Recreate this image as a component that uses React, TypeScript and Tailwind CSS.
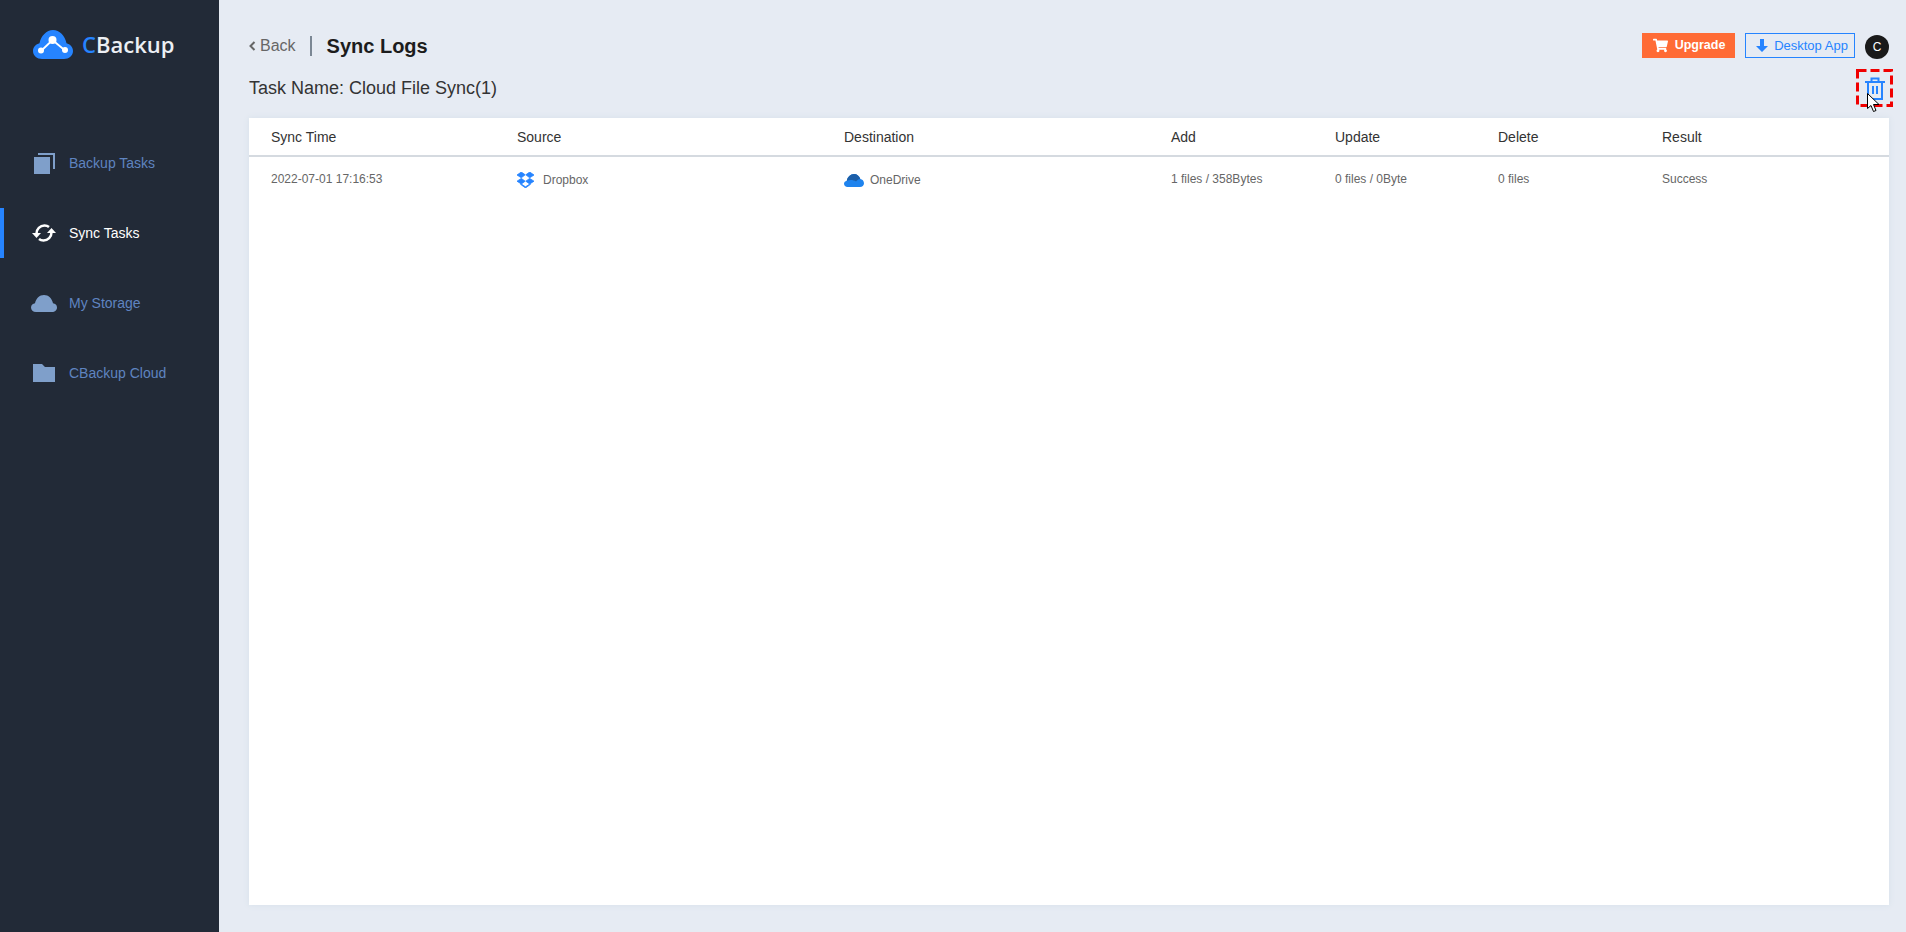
import { FaShoppingCart } from "react-icons/fa";

function Logo() {
  return (
    <svg width="40" height="29" viewBox="0 0 40 29" className="shrink-0">
      <path
        d="M9 29C4 29 0 25.500 0 21c0-4 3-7 6.500-7.800C8 6 13.500 0 20 0c6.500 0 12 5.500 13.500 13.200C37 14 40 17 40 21c0 4.500-4 8-9 8H9z"
        fill="#2684ff"
      />
      <path d="M8 21 19.500 10 32 20.500" stroke="#fff" strokeWidth="1.800" fill="none" />
      <circle cx="19.500" cy="10" r="4" fill="#fff" />
      <circle cx="8" cy="20.500" r="3" fill="#fff" />
      <circle cx="32" cy="20" r="3" fill="#fff" />
    </svg>
  );
}

function BackupIcon() {
  return (
    <svg width="21" height="21" viewBox="0 0 21 21">
      <rect x="0" y="4" width="16" height="17" fill="#7f9fca" />
      <path d="M4 1h16v15" stroke="#7f9fca" strokeWidth="2" fill="none" />
    </svg>
  );
}

function SyncIcon() {
  return (
    <svg width="24" height="18" viewBox="0 0 24 18">
      <path d="M4.500 9.500C4.500 5 8 1.500 12.500 1.500c1.800 0 3.300.5 4.500 1.500" stroke="#fff" strokeWidth="2.500" fill="none" />
      <path d="M0 9h9l-4.500 5z" fill="#fff" />
      <path d="M19.500 8.500c0 4.500-3.500 8-8 8-1.800 0-3.300-.5-4.500-1.500" stroke="#fff" strokeWidth="2.500" fill="none" />
      <path d="M15 9h9l-4.500-5z" fill="#fff" />
    </svg>
  );
}

function CloudIcon() {
  return (
    <svg width="26" height="17" viewBox="0 0 26 17">
      <path
        d="M5 17C2 17 0 15 0 12.500 0 10 2 8.500 4 8.200 5 3.500 8.500 0 13 0s8 3.500 9 8.200c2.200.3 4 1.800 4 4.300S24 17 21 17H5z"
        fill="#7f9fca"
      />
    </svg>
  );
}

function FolderIcon() {
  return (
    <svg width="22" height="18" viewBox="0 0 22 18">
      <path d="M0 0h9l3 3h10v15H0z" fill="#7f9fca" />
    </svg>
  );
}

function DropboxIcon() {
  return (
    <svg width="17" height="16" viewBox="0 0 17 16">
      <path
        d="M4.300 0 8.200 2.800 4.300 5.800 0 3zM12.700 0 8.800 2.800l3.900 3L17 3zM4.300 6.400 8.200 9.200 4.300 12 0 9.200zM12.700 6.400 8.800 9.200l3.900 2.800L17 9.200zM3.500 12.300l5 3.700 5-3.700-1-.1-4 2.600-3.900-2.600z"
        fill="#2684ff"
        stroke="#2684ff"
        strokeWidth="0.800"
      />
    </svg>
  );
}

function OneDriveIcon() {
  return (
    <svg width="20" height="13" viewBox="0 0 20 13">
      <path
        d="M3.500 13C1.500 13 0 11.500 0 9.800 0 8.200 1.200 7 2.800 6.700 3.500 3 6.500 0 10 0c3 0 5.500 2 6.300 5 2 .2 3.700 2 3.700 4.200C20 11.300 18.300 13 16 13H3.500z"
        fill="#1e83ee"
      />
      <path
        d="M2.800 6.700C3.500 3 6.500 0 10 0c3 0 5.500 2 6.300 5-2.300.2-3.500 1.500-4.300 2.500C10 6 6 5.500 2.800 6.700z"
        fill="#1c5fa8"
      />
    </svg>
  );
}

function TrashIcon() {
  return (
    <svg width="20" height="23" viewBox="0 0 20 23">
      <path d="M0 5h20M6.500 5V1.500h7V5" stroke="#2684ff" strokeWidth="2" fill="none" />
      <path d="M3 5v17h14V5" stroke="#2684ff" strokeWidth="2" fill="none" />
      <path d="M8 9v8M12 9v8" stroke="#2684ff" strokeWidth="2" fill="none" />
    </svg>
  );
}

function CursorIcon() {
  return (
    <svg width="13" height="20" viewBox="0 0 13 20">
      <path d="M.5.500v15l3.500-3 2.500 6 2.500-1-2.500-6H12z" fill="#fff" stroke="#000" strokeWidth="1" />
    </svg>
  );
}

function DownloadIcon() {
  return (
    <svg width="12" height="13" viewBox="0 0 12 13">
      <path d="M4 0h4v7h4l-6 6-6-6h4z" fill="#2684ff" />
    </svg>
  );
}

const nav = [
  { label: "Backup Tasks", icon: <BackupIcon />, active: false },
  { label: "Sync Tasks", icon: <SyncIcon />, active: true },
  { label: "My Storage", icon: <CloudIcon />, active: false },
  { label: "CBackup Cloud", icon: <FolderIcon />, active: false },
];

const head = [
  { label: "Sync Time", w: "w-[246px]" },
  { label: "Source", w: "w-[327px]" },
  { label: "Destination", w: "w-[327px]" },
  { label: "Add", w: "w-[164px]" },
  { label: "Update", w: "w-[163px]" },
  { label: "Delete", w: "w-[164px]" },
  { label: "Result", w: "flex-1" },
];

export default function App() {
  return (
    <div className="flex h-screen w-full overflow-hidden bg-[#e6ebf3] font-['Liberation_Sans',Arial,sans-serif]">
      <aside className="flex w-[219px] shrink-0 flex-col bg-[#222a37]">
        <div className="flex h-[138px] items-start gap-[9px] pl-[33px] pt-[30px]">
          <Logo />
          <span className="font-['Open_Sans',sans-serif] text-[22px] font-semibold leading-[29px] text-[#eceff4]">
            <span className="text-[#2684ff]">C</span>Backup
          </span>
        </div>
        <nav className="flex flex-col gap-5">
          {nav.map((n) => (
            <div key={n.label} className="relative flex h-[50px] items-center">
              {n.active && <div className="absolute inset-y-0 left-0 w-1 bg-[#2684ff]" />}
              <div className="flex w-[69px] justify-center pl-[19px]">{n.icon}</div>
              <span className={`text-sm ${n.active ? "text-white" : "text-[#5f84c0]"}`}>{n.label}</span>
            </div>
          ))}
        </nav>
      </aside>

      <main className="flex min-w-0 flex-1 flex-col pb-[27px] pl-[30px] pr-[17px]">
        <div className="flex h-[70px] shrink-0 items-start justify-between pt-[32px]">
          <div className="mt-[1px] flex h-[25px] items-center">
            <svg width="7" height="10" viewBox="0 0 7 10" className="mr-[4px]">
              <path d="M5.500 1 1.500 5l4 4" stroke="#666" strokeWidth="2" fill="none" />
            </svg>
            <span className="text-base text-[#666]">Back</span>
            <span className="ml-[14px] mr-[15px] h-[20px] w-[2px] bg-[#7b8794]" />
            <span className="text-xl font-bold text-[#1c1c1c]">Sync Logs</span>
          </div>
          <div className="flex items-center">
            <button className="flex h-[25px] w-[93px] items-center justify-center gap-[7px] bg-[#ff6b35] pl-[1px] text-[12.500px] font-bold text-white">
              <FaShoppingCart className="text-[15px]" />
              Upgrade
            </button>
            <button className="ml-[10px] flex h-[25px] w-[110px] items-center justify-center gap-[6px] border border-[#2684ff] pl-[4px] text-[13px] text-[#2684ff]">
              <DownloadIcon />
              Desktop App
            </button>
            <div className="ml-[10px] mt-[3px] flex h-6 w-6 items-center justify-center rounded-full bg-[#1a1a1a] text-xs text-white">
              C
            </div>
          </div>
        </div>

        <div className="relative flex h-[48px] shrink-0 items-start">
          <span className="text-lg leading-[36px] text-[#333]">Task Name: Cloud File Sync(1)</span>
          <div className="absolute right-[-4px] top-[-1px] flex h-[38px] w-[37px] justify-center pt-[8px]">
            <TrashIcon />
          </div>
          <svg width="37" height="38" viewBox="0 0 37 38" className="absolute right-[-4px] top-[-1px]">
            <rect x="1.500" y="1.500" width="34" height="35" fill="none" stroke="#f00000" strokeWidth="3" strokeDasharray="9 4" />
          </svg>
          <div className="absolute right-[9px] top-[23px]">
            <CursorIcon />
          </div>
        </div>

        <section className="min-h-0 flex-1 bg-white shadow-[0_0_6px_#d6e0ea]">
          <div className="flex h-[39px] items-center border-b-2 border-[#d5dae0]">
            {head.map((h) => (
              <div key={h.label} className={`${h.w} pl-[22px] text-sm text-[#333]`}>
                {h.label}
              </div>
            ))}
          </div>
          <div className="flex h-[44px] items-center text-xs text-[#666]">
            <div className="w-[246px] pl-[22px]">2022-07-01 17:16:53</div>
            <div className="flex w-[327px] items-center gap-[9px] pl-[22px] pt-[2px]">
              <DropboxIcon />
              Dropbox
            </div>
            <div className="flex w-[327px] items-center gap-[6px] pl-[22px] pt-[2px]">
              <OneDriveIcon />
              OneDrive
            </div>
            <div className="w-[164px] pl-[22px]">1 files / 358Bytes</div>
            <div className="w-[163px] pl-[22px]">0 files / 0Byte</div>
            <div className="w-[164px] pl-[22px]">0 files</div>
            <div className="flex-1 pl-[22px]">Success</div>
          </div>
        </section>
      </main>
    </div>
  );
}
